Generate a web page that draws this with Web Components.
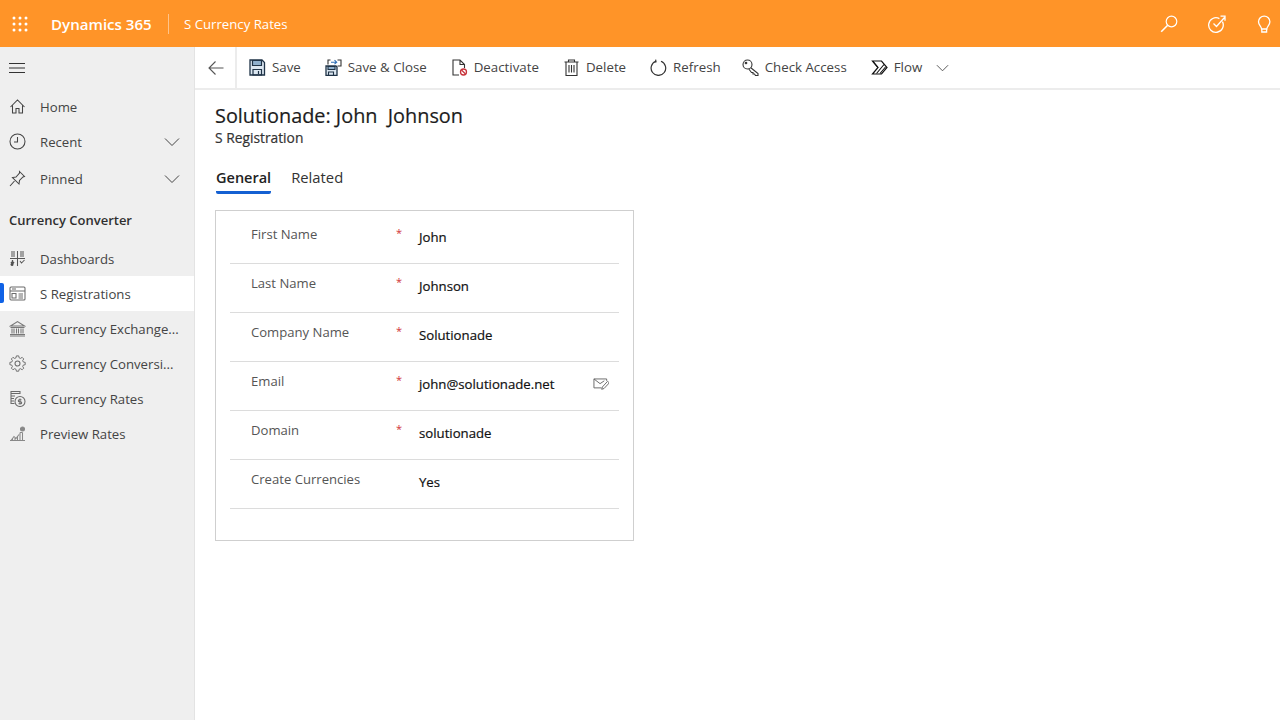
<!DOCTYPE html>
<html lang="en"><head><meta charset="utf-8"><title>S Registration</title>
<style>
html,body{margin:0;padding:0;height:100%;background:#fff}
body{font-family:"Open Sans","Noto Sans","Liberation Sans",sans-serif;color:#333;overflow:hidden}
</style></head><body>
<app-shell></app-shell>
<script>
const I={
waffle:'<g fill="#fff" stroke="none"><circle cx="3" cy="3" r="1.5"/><circle cx="9" cy="3" r="1.5"/><circle cx="15" cy="3" r="1.5"/><circle cx="3" cy="9" r="1.5"/><circle cx="9" cy="9" r="1.5"/><circle cx="15" cy="9" r="1.5"/><circle cx="3" cy="15" r="1.5"/><circle cx="9" cy="15" r="1.5"/><circle cx="15" cy="15" r="1.5"/></g>',
search:'<circle cx="11.5" cy="6.5" r="5.3"/><path d="M7.7 10.3 1.2 16.8" stroke-width="1.6"/>',
task:'<path d="M14.4 6.6a7.3 7.3 0 1 1-3-3"/><path d="M5.5 8.5l3 3 8-9M12.5 1.2h4.500v4.500"/>',
bulb:'<path d="M5.6 13.5C5.4 10.8 2.5 9.6 2.5 6.3a5.7 5.7 0 0 1 11.4 0c0 3.3-2.9 4.5-3.1 7.2z"/><path d="M5.8 13.5v3h4.800v-3"/>',
menu:'<path d="M0 3.500h16M0 8h16M0 12.500h16"/>',
home:'<path d="M1.500 9 8.500 2l7 7M3.500 7.500V15H7v-4.500h3V15h3.500V7.500"/>',
clock:'<circle cx="8.500" cy="8.500" r="7.500"/><path d="M8.500 4v5H5"/>',
pin:'<path d="M10.500 1.500l5 5-1.500.5-3.500 3.500-.5 3.500L3.500 7.500 7 7 10.500 3zM5.500 11 1 16"/>',
dash:'<path d="M8.500 1v15M1 8.500h15M2 2h4M2 4h4M2 6h4M11 2h4M11 4h4M11 6h4M11 11l1.500 2 3-3"/><path d="M3.500 10v3M2 12l1.500 2L5 12" stroke-width="1.300"/><circle cx="3" cy="14.500" r="1" fill="#333"/>',
reg:'<rect x="1" y="2" width="15" height="13" rx="1"/><path d="M1 6h15M3 4h4M3 8.500h4V13H3zM9.500 9H14M9.500 11H14M9.500 13H14"/>',
bank:'<path d="M1.500 6 8.500 1.500 15.500 6zM1.500 7.500h14M3 8.500v5M5 8.500v5M7.500 8.500v5M9.500 8.500v5M12 8.500v5M14 8.500v5M1 14.500h15M1 16h15"/>',
gear:'<circle cx="8.500" cy="8.500" r="2.500"/><path d="M7.200 0h2.600l.4 2.100 1.600.7 1.800-1.200 1.800 1.800-1.200 1.800.7 1.600 2.100.4v2.600l-2.100.4-.7 1.600 1.200 1.800-1.800 1.800-1.800-1.200-1.600.7-.4 2.100H7.200l-.4-2.100-1.600-.7-1.800 1.200-1.800-1.800 1.200-1.800-.7-1.600L0 9.800V7.200l2.100-.4.700-1.600L1.600 3.400l1.800-1.800 1.800 1.200 1.600-.7z" transform="translate(.9 .9) scale(.9)"/>',
rates:'<path d="M2 1.500h9v2H2zM2 3.500v10h3.500M2 6h4M2 8.500h3M2 11h3"/><circle cx="11" cy="11.500" r="5"/><path d="M11 8.500v6M12.500 9.800h-2.200a1 1 0 0 0 0 2h1.400a1 1 0 0 1 0 2H9.500"/>',
preview:'<path d="M1 15.500h15M2 15.500l3-4 2 2 3-4M3.500 13v2M6 12v3M8.500 11v4M11 7.500v8M13.500 7.500v8"/><path d="M11 7.500h2.500"/><circle cx="13.500" cy="4" r="2" fill="#888"/>',
chev:'<path d="M1 1.500 8 8.500l7-7"/>',
back:'<path d="M15.500 8H1M7.500 1.500 1 8l6.500 6.500"/>',
save:'<path d="M1 1h12l2.500 2.500V16H1z" stroke="#1f3347" stroke-width="1.300" fill="#dce7f1"/><path d="M3.500 1.500h9v5h-9z" fill="#8fb0cd" stroke="#1f3347" stroke-width="1.200"/><path d="M4 16v-5.500h8.500V16zM9.500 12v3" stroke="#1f3347" stroke-width="1.200"/>',
saveclose:'<path d="M1 7h10l1 1v8.500H1z" stroke="#1f3347" stroke-width="1.300" fill="#dce7f1"/><path d="M3 7.500h7v3H3z" fill="#8fb0cd" stroke="#1f3347"/><path d="M3.500 16.500v-3.500h5v3.500" stroke="#1f3347"/><path d="M5.500 1H3v4.500M12.500 1H16v6h-3.500" stroke="#333"/><path d="M6 3.200h5.500M9.500 1.200l2.200 2-2.200 2" stroke="#2f6fb5"/>',
deact:'<path d="M8 16H2V1h7l4.500 4.500V9M9 1v4.500h4.500"/><circle cx="12.500" cy="13" r="3" stroke="#c8343c" stroke-width="1.300"/><path d="M10.500 11l4 4" stroke="#c8343c" stroke-width="1.300"/>',
del:'<path d="M1.500 3h14M5.500 3V1h6v2M3 3v13.500h11V3M6 6v7.500M8.500 6v7.500M11 6v7.500"/>',
refresh:'<path d="M5.800 2.300A7.300 7.300 0 1 0 11 2.300M5.600.6 6 2.800l-2.200.6" stroke-width="1.200"/>',
key:'<circle cx="5.500" cy="5.500" r="4.500"/><path d="M8.800 8.800 16 14.500v2h-2.500l-1-1.500H11v-1.500H9.500L6.800 10"/><circle cx="4" cy="4" r=".8"/>',
flow:'<path d="M1.500 2h9L16 8.500 10.500 15h-9L7 8.500z" stroke="#111" stroke-width="1.200"/><path d="M5.500 14.500 13 5.500M9 14.500l5.500-6.500M7 8.500 2 2.500" stroke="#111"/>',
mail:'<path d="M14.500 3V1H1v9.500h8M1 1l6.500 5L12 3"/><path d="M15.500 3.500 10 9.500l-.8 2.500 2.500-.8 5.600-6z"/>'
};
function svg(n,w,h,vb,c,sw){return `<svg width="${w}" height="${h}" viewBox="0 0 ${vb} ${vb}" fill="none" stroke="${c||'#444'}" stroke-width="${sw||1}" aria-hidden="true">${I[n]}</svg>`}

class TopBar extends HTMLElement{constructor(){super();this.attachShadow({mode:'open'}).innerHTML=`<style>
:host{display:flex;align-items:center;height:47px;background:#ff9428;color:#fff;flex:none}
.w{width:51px;padding-left:11px;box-sizing:border-box;display:flex}
.b{font-size:15.1px;font-weight:600;white-space:nowrap;width:101px}
.s{width:1px;height:20px;background:#ffc48a;margin:0 15px 0 16px}
.t{font-size:13.2px;flex:1;padding-top:1px}
.r{display:flex;gap:30px;padding-right:7px;align-items:center}
svg{display:block}
</style><div class="w">${svg('waffle',18,18,18)}</div><div class="b">Dynamics 365</div><div class="s"></div><div class="t">S Currency Rates</div><div class="r">${svg('search',18,18,18,'#fff',1.2)}${svg('task',18,18,18,'#fff',1.3)}${svg('bulb',17,18,17,'#fff',1.3)}</div>`}}
customElements.define('top-bar',TopBar);

class NavItem extends HTMLElement{constructor(){super();this.attachShadow({mode:'open'})}
connectedCallback(){const ic=this.getAttribute('icon'),sel=this.hasAttribute('selected'),ch=this.hasAttribute('chevron'),c=this.getAttribute('color')||'#6b6b6b';
this.shadowRoot.innerHTML=`<style>
:host{display:flex;align-items:center;height:35px;padding-left:9px;position:relative;font-size:13.2px;color:#444;white-space:nowrap;background:${sel?'#fff':'transparent'}}
.i{width:17px;height:17px;margin-right:14px;flex:none}
.l{flex:1;overflow:hidden}
.c{margin-right:14px;display:block}
svg{display:block}
.m{position:absolute;left:0;top:7px;width:4px;height:20px;background:#0f62e6;border-radius:0 2px 2px 0}
</style>${sel?'<div class="m"></div>':''}<div class="i">${svg(ic,17,17,17,c,1.05)}</div><div class="l"><slot></slot></div>${ch?`<div class="c">${svg('chev',16,10,16,'#444',1).replace('viewBox="0 0 16 16"','viewBox="0 0 16 10"')}</div>`:''}`}}
customElements.define('nav-item',NavItem);

class SideNav extends HTMLElement{constructor(){super();this.attachShadow({mode:'open'}).innerHTML=`<style>
:host{display:block;width:195px;box-sizing:border-box;background:#efefef;border-right:1px solid #e3e3e3;flex:none;padding-top:5px}
.m{height:32px;display:flex;align-items:center;padding-left:9px;margin-bottom:5px}
h2{font:600 13px "Open Sans",sans-serif;color:#2f2f2f;margin:0;height:44px;line-height:45px;padding-left:9px}
.g{display:flex;flex-direction:column}
svg{display:block}
</style>
<div class="m">${svg('menu',16,16,16,'#333',1.1)}</div>
<div class="g"><nav-item icon="home" color="#444">Home</nav-item><nav-item icon="clock" color="#444" chevron>Recent</nav-item><nav-item icon="pin" color="#444" chevron style="height:39px">Pinned</nav-item></div>
<h2>Currency Converter</h2>
<div class="g"><nav-item icon="dash" color="#555" style="margin-top:-1px">Dashboards</nav-item><nav-item icon="reg" selected>S Registrations</nav-item><nav-item icon="bank" color="#777">S Currency Exchange...</nav-item><nav-item icon="gear">S Currency Conversi...</nav-item><nav-item icon="rates">S Currency Rates</nav-item><nav-item icon="preview" color="#888">Preview Rates</nav-item></div>`}}
customElements.define('side-nav',SideNav);

class ToolBtn extends HTMLElement{constructor(){super();this.attachShadow({mode:'open'})}
connectedCallback(){const ic=this.getAttribute('icon');
this.shadowRoot.innerHTML=`<style>
:host{display:flex;align-items:center;gap:6px;font-size:13.3px;color:#444;white-space:nowrap;margin-right:24px}
svg{display:block;flex:none}
span{padding-bottom:2px}
</style>${svg(ic,17,17,17,'#333',1.1)}<span><slot></slot></span>`}}
customElements.define('tool-btn',ToolBtn);

class CmdBar extends HTMLElement{constructor(){super();this.attachShadow({mode:'open'}).innerHTML=`<style>
:host{display:flex;align-items:center;border-bottom:2px solid #ececec;box-sizing:border-box;height:43px;flex:none}
.b{width:42px;height:100%;border-right:2px solid #ececec;box-sizing:border-box;display:flex;align-items:center;padding-left:13px;margin-right:12px;flex:none}
svg{display:block}
</style><div class="b">${svg('back',16,16,16,'#555',1.1)}</div>
<tool-btn icon="save">Save</tool-btn><tool-btn icon="saveclose">Save &amp; Close</tool-btn><tool-btn icon="deact">Deactivate</tool-btn><tool-btn icon="del">Delete</tool-btn><tool-btn icon="refresh" style="margin-right:21px">Refresh</tool-btn><tool-btn icon="key">Check Access</tool-btn><tool-btn icon="flow" style="margin-right:14px">Flow</tool-btn>${svg('chev',13,8,16,'#555',1.2).replace('viewBox="0 0 16 16"','viewBox="0 0 16 10"')}`}}
customElements.define('cmd-bar',CmdBar);

class FormRow extends HTMLElement{constructor(){super();this.attachShadow({mode:'open'})}
connectedCallback(){const req=this.hasAttribute('required'),mail=this.hasAttribute('mail');
this.shadowRoot.innerHTML=`<style>
:host{display:flex;height:49px;box-sizing:border-box;border-bottom:1px solid #dcdcdc;font-size:13.2px;position:relative}
.l{width:144px;padding-left:21px;color:#555;padding-top:9px;line-height:20px;flex:none;font-size:13.1px}
.r{width:24px;flex:none;color:#d13438;padding-top:9px;line-height:18px;font-size:11px;text-indent:1px}
.v{flex:1;color:#111;font-weight:500;padding-top:12px;line-height:20px;-webkit-text-stroke:.2px #111}
.m{margin-right:10px;padding-top:16px}
svg{display:block}
</style><div class="l"><slot name="label"></slot></div><div class="r">${req?'*':''}</div><div class="v"><slot></slot></div>${mail?`<div class="m">${svg('mail',16,16,17,'#666',1)}</div>`:''}`}}
customElements.define('form-row',FormRow);

class FormCard extends HTMLElement{constructor(){super();this.attachShadow({mode:'open'}).innerHTML=`<style>
:host{display:block;width:419px;height:331px;box-sizing:border-box;border:1px solid #cfcfcf;padding:4px 14px 0}
</style><slot></slot>`}}
customElements.define('form-card',FormCard);

class TabBar extends HTMLElement{constructor(){super();this.attachShadow({mode:'open'}).innerHTML=`<style>
:host{display:flex;gap:20px;height:30px;font-size:14.8px;color:#333;margin-bottom:14px;padding-left:1px;line-height:22px}
.a{font-weight:600;font-size:14.5px;line-height:24px;color:#222;border-bottom:3px solid #1460d2;height:25px;border-radius:0 0 2px 2px}
</style><div class="a">General</div><div>Related</div>`}}
customElements.define('tab-bar',TabBar);

class AppShell extends HTMLElement{constructor(){super();this.attachShadow({mode:'open'}).innerHTML=`<style>
:host{display:flex;flex-direction:column;height:720px;width:1280px}
.main{display:flex;flex:1;min-height:0}
.c{flex:1;display:flex;flex-direction:column;min-width:0}
.p{padding:13px 0 0 20px}
h1{font-size:19.85px;font-weight:500;margin:0;color:#1c1c1c;line-height:26px;white-space:pre;-webkit-text-stroke:.2px #1c1c1c}
.sub{font-size:13.8px;font-weight:500;color:#333;line-height:18px;margin-bottom:19px;-webkit-text-stroke:.2px #333}
</style><top-bar></top-bar><div class="main"><side-nav></side-nav><div class="c"><cmd-bar></cmd-bar><div class="p">
<h1>Solutionade: John  Johnson</h1><div class="sub">S Registration</div><tab-bar></tab-bar>
<form-card>
<form-row required><span slot="label">First Name</span>John</form-row>
<form-row required><span slot="label">Last Name</span>Johnson</form-row>
<form-row required><span slot="label">Company Name</span>Solutionade</form-row>
<form-row required mail><span slot="label">Email</span>john@solutionade.net</form-row>
<form-row required><span slot="label">Domain</span>solutionade</form-row>
<form-row><span slot="label">Create Currencies</span>Yes</form-row>
</form-card></div></div></div>`}}
customElements.define('app-shell',AppShell);
</script>
</body></html>
